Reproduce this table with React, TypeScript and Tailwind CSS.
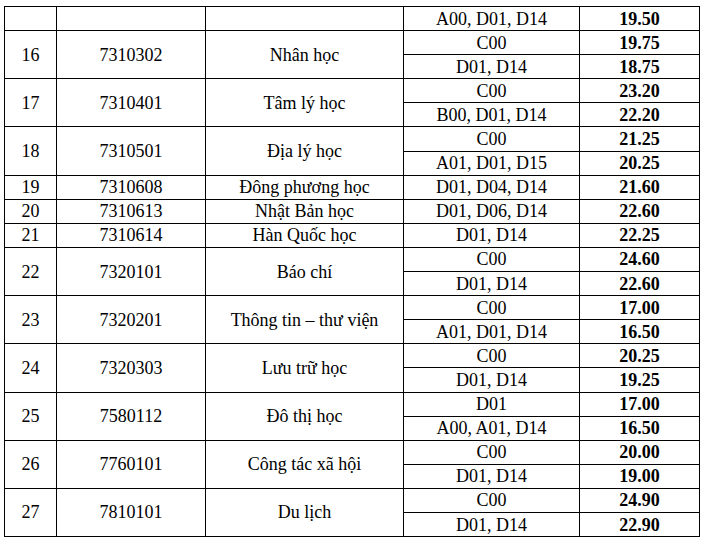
import React from "react";

interface Option {
  combo: string;
  score: string;
}

interface Major {
  stt: string;
  code: string;
  name: string;
  options: Option[];
}

const majors: Major[] = [
  { stt: "", code: "", name: "", options: [{ combo: "A00, D01, D14", score: "19.50" }] },
  { stt: "16", code: "7310302", name: "Nhân học", options: [{ combo: "C00", score: "19.75" }, { combo: "D01, D14", score: "18.75" }] },
  { stt: "17", code: "7310401", name: "Tâm lý học", options: [{ combo: "C00", score: "23.20" }, { combo: "B00, D01, D14", score: "22.20" }] },
  { stt: "18", code: "7310501", name: "Địa lý học", options: [{ combo: "C00", score: "21.25" }, { combo: "A01, D01, D15", score: "20.25" }] },
  { stt: "19", code: "7310608", name: "Đông phương học", options: [{ combo: "D01, D04, D14", score: "21.60" }] },
  { stt: "20", code: "7310613", name: "Nhật Bản học", options: [{ combo: "D01, D06, D14", score: "22.60" }] },
  { stt: "21", code: "7310614", name: "Hàn Quốc học", options: [{ combo: "D01, D14", score: "22.25" }] },
  { stt: "22", code: "7320101", name: "Báo chí", options: [{ combo: "C00", score: "24.60" }, { combo: "D01, D14", score: "22.60" }] },
  { stt: "23", code: "7320201", name: "Thông tin – thư viện", options: [{ combo: "C00", score: "17.00" }, { combo: "A01, D01, D14", score: "16.50" }] },
  { stt: "24", code: "7320303", name: "Lưu trữ học", options: [{ combo: "C00", score: "20.25" }, { combo: "D01, D14", score: "19.25" }] },
  { stt: "25", code: "7580112", name: "Đô thị học", options: [{ combo: "D01", score: "17.00" }, { combo: "A00, A01, D14", score: "16.50" }] },
  { stt: "26", code: "7760101", name: "Công tác xã hội", options: [{ combo: "C00", score: "20.00" }, { combo: "D01, D14", score: "19.00" }] },
  { stt: "27", code: "7810101", name: "Du lịch", options: [{ combo: "C00", score: "24.90" }, { combo: "D01, D14", score: "22.90" }] },
];

const cell = "border border-black text-center align-middle p-0 leading-none";

export default function App() {
  return (
    <div className="w-[702px] h-[539px] bg-white pt-[6px] pl-[4px] text-black text-[18px] [font-family:'Liberation_Serif','Times_New_Roman',serif]">
      <table className="border-collapse table-fixed w-[696px]">
        <colgroup>
          <col className="w-[52px]" />
          <col className="w-[149px]" />
          <col className="w-[198px]" />
          <col className="w-[176px]" />
          <col className="w-[120px]" />
        </colgroup>
        <tbody>
          {majors.map((m, i) =>
            m.options.map((o, j) => (
              <tr key={`${i}-${j}`} className="h-[24.1px]">
                {j === 0 && (
                  <>
                    <td rowSpan={m.options.length} className={cell}>{m.stt}</td>
                    <td rowSpan={m.options.length} className={cell}>{m.code}</td>
                    <td rowSpan={m.options.length} className={cell}>{m.name}</td>
                  </>
                )}
                <td className={cell}>{o.combo}</td>
                <td className={`${cell} font-bold`}>{o.score}</td>
              </tr>
            ))
          )}
        </tbody>
      </table>
    </div>
  );
}
